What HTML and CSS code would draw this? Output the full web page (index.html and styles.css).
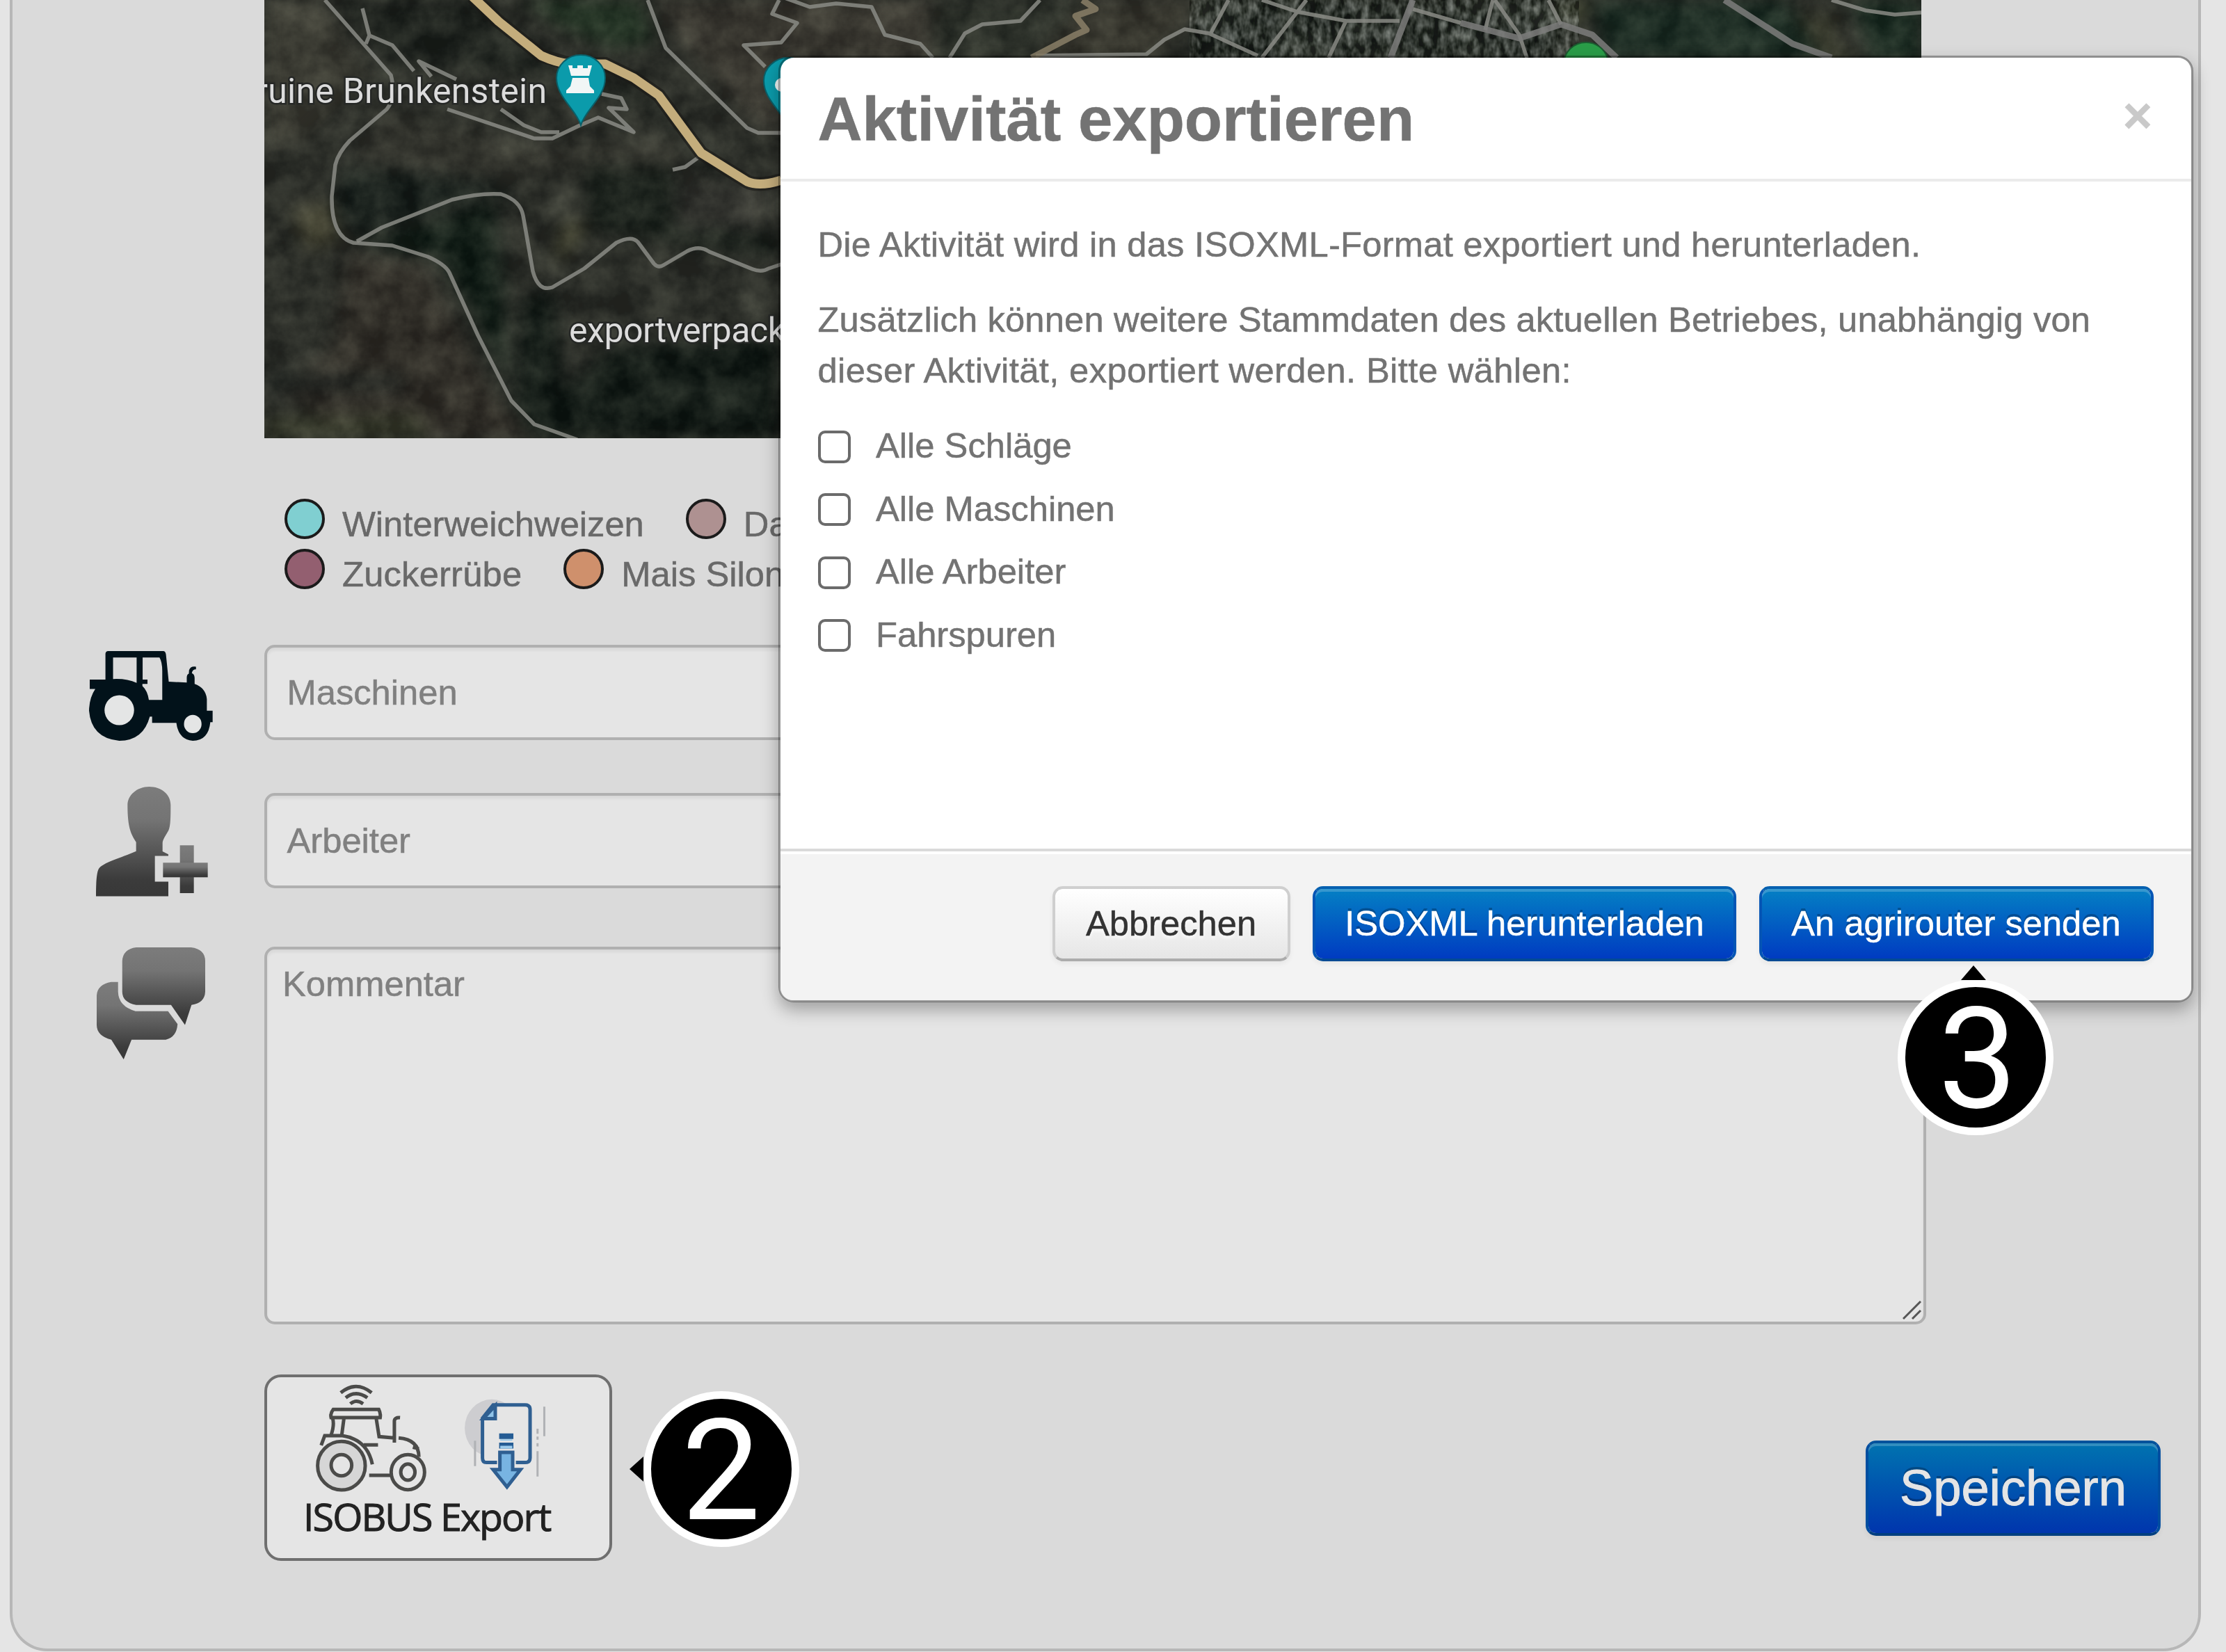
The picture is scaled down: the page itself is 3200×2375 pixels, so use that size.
FILE: index.html
```html
<!DOCTYPE html>
<html lang="de">
<head>
<meta charset="utf-8">
<title>Aktivität exportieren</title>
<link rel="stylesheet" href="styles.css">
</head>
<body>
<main class="panel">
  <div class="row map-row">
    <svg class="map" viewBox="0 0 2382 630" width="2382" height="630">
      <defs>
        <filter id="soft" x="-20%" y="-20%" width="140%" height="140%" color-interpolation-filters="sRGB"><feGaussianBlur stdDeviation="12"/></filter>
        <filter id="grain" x="0" y="0" width="100%" height="100%" color-interpolation-filters="sRGB">
          <feTurbulence type="fractalNoise" baseFrequency="0.022" numOctaves="5" seed="8"/>
          <feColorMatrix values="0.7 0 0 0 -0.19  0.7 0 0 0 -0.18  0.6 0 0 0 -0.15  0 0 0 0 0.34"/>
        </filter>
        <filter id="town" x="0" y="0" width="100%" height="100%" color-interpolation-filters="sRGB">
          <feTurbulence type="fractalNoise" baseFrequency="0.09 0.05" numOctaves="3" seed="3"/>
          <feColorMatrix values="1.5 0 0 0 -0.52  1.5 0 0 0 -0.5  1.5 0 0 0 -0.53  0 0 0 0 0.5"/>
        </filter>
      </defs>
      <rect width="2382" height="630" fill="#30322c"/>
      <g filter="url(#soft)">
        <path fill="#1f241f" d="M100 0H300L420 90 560 140 640 230 720 290 640 250 560 160 400 110 180 90Z"/>
        <path fill="#263c28" d="M370 0H540L560 60 500 70 430 40Z"/>
        <path fill="#423e36" d="M560 0H980V90H760L740 190 700 170 600 60Z"/>
        <path fill="#45443a" d="M0 0H80L150 110 60 200 0 210Z"/>
        <path fill="#3c3c34" d="M170 160L400 210 600 200 600 250 430 240 320 260 130 230Z"/>
        <path fill="#161f1b" d="M110 240L330 260 370 300 330 280 130 340 100 300Z"/>
        <path fill="#0e1d15" d="M140 350L330 290 345 400 350 560 420 630 380 620 300 450 250 370Z"/>
        <path fill="#58563f" d="M40 300L95 290 110 345 60 360Z"/>
        <path fill="#37322b" d="M120 365L230 380 330 570 390 630 130 630 20 560 100 500Z"/>
        <path fill="#171f19" d="M460 240L590 240 590 320 740 340V370L600 350 470 330Z"/>
        <path fill="#3a3a35" d="M600 260H720V330H590Z"/>
        <path fill="#0e1813" d="M370 430L415 420 430 560 500 500 740 480V630H390L360 560Z"/>
        <path fill="#5b5a3f" d="M430 320L465 320 440 360 415 380Z"/>
        <path fill="#434632" d="M0 600L220 595 240 630H0Z"/>
        <path fill="#1a1f1d" d="M0 540H200V560H0Z"/>
        <path fill="#2f342c" d="M960 0H1180L1100 90H960Z"/>
        <path fill="#3f3d33" d="M1180 0H1360L1260 90H1110Z"/>
        <path fill="#2b332f" d="M1340 0H1860V90H1340Z"/>
        <path fill="#4f543a" d="M1850 0H1910L1890 35 1870 35Z"/>
        <path fill="#1b3126" d="M1910 0H2190L2240 90H1930Z"/>
        <path fill="#454735" d="M2200 20H2260V60L2300 90H2240Z"/>
        <path fill="#1a3024" d="M2280 0H2382V90H2310Z"/>
      </g>
      <rect width="2382" height="630" filter="url(#grain)"/>
      <rect x="1330" width="560" height="100" filter="url(#town)"/>
      <g class="paths">
        <path d="M87 0L182 108Q190 140 176 157L123 202 Q106 220 102 237L97 282Q96 340 128 349L184 353 235 369Q260 380 266 392L307 482 355 576 388 610 450 632"/>
        <path d="M133 347L169 327 270 287Q310 277 340 279 368 288 372 310L386 390Q394 420 414 413L460 386 506 349Q528 338 537 348L560 379Q566 386 574 381L608 361Q625 352 640 362L702 387Q715 392 725 386L743 380"/>
        <path d="M141 12L151 51 184 65 215 102M151 51L146 63M240 110L222 88 276 114"/>
        <path d="M263 157L388 199H414L454 180 480 169 531 190 495 155 521 157 513 141 485 135M340 157L373 180 398 190H424"/>
        <path d="M551 0L577 69 694 184 710 191H743M587 244L605 240 623 227"/>
        <path d="M740 0L730 20 766 33 743 61 689 65 720 96M748 -3L784 10 822 5 873 10 892 50 943 63 961 83"/>
        <path d="M1115 0L1087 30 1032 35 1007 48 985 83M1109 80L1268 78 1294 57 1323 42 1358 48 1428 80"/>
        <path d="M1386 0L1361 47M1434 0L1485 17 1555 30H1632M1498 0L1434 83M1555 30L1530 83M1651 13L1720 33"/>
        <path d="M1766 0L1755 43M1769 0L1804 50 1815 83M1846 0L1864 35M2253 0L2302 15 2344 21 2382 18"/>
        <path class="wide" d="M1651 0L1619 83M1720 33L1804 55 1864 35 1909 50 1944 83M2099 0L2197 63 2253 83"/>
        <path class="track" d="M1176 0L1195 13 1166 23 1182 43 1166 50 1103 83"/>
      </g>
      <path class="road-edge" d="M299 -5L337 31 398 80 439 92H490L531 112 567 137 628 220 694 261Q708 269 743 259"/>
      <path class="road" d="M299 -5L337 31 398 80Q420 90 439 92H490L531 112 567 137 628 220 694 261Q712 269 743 259"/>
      <g>
        <path class="pin" d="M455 180C449 158 420 140 420 112A35 33 0 0 1 490 112C490 140 461 158 455 180Z"/>
        <path fill="#f1f6f6" d="M437 94H443V98H450V94H458V98H465V94H471L467 109H441ZM443 112H466L468 124 474 130V134H434V130L440 124Z"/>
        <path class="pin" d="M753 184C747 162 718 144 718 116A35 33 0 0 1 788 116C788 144 759 162 753 184Z"/>
        <circle cx="744" cy="122" r="10" fill="#f1f6f6"/>
        <ellipse cx="1900" cy="92" rx="32" ry="31" fill="#2a9d48" stroke="#1b5c30" stroke-width="2"/>
      </g>
      <text class="map-label" x="-12" y="148" textLength="418">ruine Brunkenstein</text>
      <text class="map-label" x="438" y="492" textLength="311">exportverpack</text>
    </svg>
  </div>

  <div class="row legend">
    <div class="legend-line">
      <span class="crop"><i class="dot wheat"></i>Winterweichweizen</span>
      <span class="crop"><i class="dot dark"></i>Da</span>
    </div>
    <div class="legend-line">
      <span class="crop beet-name"><i class="dot beet"></i>Zuckerrübe</span>
      <span class="crop"><i class="dot maize"></i>Mais Silon</span>
    </div>
  </div>

  <div class="row machines">
    <svg class="icon tractor" viewBox="85 87 536 305" preserveAspectRatio="none" fill="#02121a">
      <path fill-rule="evenodd" d="M156 96Q157 87 168 87H406Q416 87 418 99L430 191 508 194V178Q508 166 517 164L518 152Q524 137 548 140V149Q533 149 530 162 541 165 542 178V199Q590 212 595 250V290H620V329H610Q602 392 534 392 472 388 463 331H358V310H348Q320 392 216 392 95 384 85 290 86 246 112 216H88V184H156ZM189 109V182Q250 180 291 195V109ZM317 109V184H338V199H316V206Q338 222 344 253H402V155Q402 125 390 109Z"/>
      <ellipse cx="216" cy="288" rx="64" ry="51" fill="#e4e5e5"/>
      <ellipse cx="534" cy="335" rx="38" ry="31" fill="#e4e5e5"/>
    </svg>
    <div class="field">Maschinen</div>
  </div>

  <div class="row workers">
    <svg class="icon person" viewBox="113 549 483 375" preserveAspectRatio="none">
      <defs>
        <linearGradient id="gray" x1="0" y1="0" x2="0" y2="1"><stop offset="0" stop-color="#7c7c7c"/><stop offset=".3" stop-color="#747474"/><stop offset=".85" stop-color="#3b3b3b"/><stop offset="1" stop-color="#383838"/></linearGradient>
      </defs>
      <path fill="url(#gray)" d="M342 549C395 549 435 575 435 612 435 650 435 682 426 698 412 718 400 730 400 742V770L425 780V785H367V873H425V923H113C113 880 115 845 124 830 140 808 220 792 286 769V738C265 712 249 690 249 612 249 578 290 549 342 549Z"/>
      <path fill="url(#gray)" d="M475 749H535V912H475Z"/>
      <path fill="url(#gray)" d="M402 808H595V858H402Z"/>
    </svg>
    <div class="field">Arbeiter</div>
  </div>

  <div class="row comment">
    <svg class="icon chat" viewBox="118 1099 467 381" preserveAspectRatio="none" fill="url(#gray)">
      <path d="M288 1099H524Q585 1105 585 1146V1250Q583 1288 526 1295L498 1363 438 1295H288Q228 1286 228 1250V1146Q230 1105 288 1099Z"/>
      <path d="M180 1217H210V1250Q212 1300 285 1316H425L466 1360Q462 1405 415 1413H268L234 1480 181 1413Q118 1400 118 1362V1262Q122 1225 180 1217Z"/>
    </svg>
    <div class="field area">Kommentar
      <svg class="grip" width="28" height="28" viewBox="0 0 28 28" fill="none" stroke="#555" stroke-width="3"><path d="M1 26L26 1M14 26L26 14"/></svg>
    </div>
  </div>

  <div class="row actions">
    <div class="isobus">
      <svg class="isobus-art" viewBox="20 52 979 518" preserveAspectRatio="none">
        <g class="ink">
          <path d="M235 122Q278 68 322 122M249 144Q278 108 310 144M262 170Q278 148 298 170"/>
          <path d="M214 194H342Q348 212 346 230H208Q205 212 214 194ZM212 232Q218 260 208 305M244 234L238 304M335 234L343 312 385 318M386 338V245Q386 228 402 230M398 318Q455 325 455 400M455 365L438 358M180 350L190 308H240Q310 325 324 432M300 348H340M315 480H378"/>
          <ellipse class="tyre" cx="237" cy="438" rx="67" ry="105"/>
          <ellipse cx="237" cy="436" rx="29" ry="46"/>
          <ellipse cx="424" cy="466" rx="47" ry="76"/>
          <ellipse cx="424" cy="466" rx="20" ry="35"/>
        </g>
        <ellipse cx="660" cy="275" rx="76" ry="124" fill="#cdcdd0"/>
        <path class="doc" fill="#e5e5e5" d="M675 424H645Q634 424 634 404V232L664 175H754Q768 175 768 196V404Q768 424 754 424H728"/>
        <path class="doc" fill="#8fc3e8" d="M636 234L670 178V234Z"/>
        <path fill="#e5e5e5" d="M676 400H726V440H676Z"/>
        <path fill="#245c94" d="M681 298H721V322H681ZM681 338H721V364H681Z"/>
        <path fill="#9ccbec" d="M684 324H718V330H684ZM684 352H718V364H684Z"/>
        <path class="doc" fill="#78b4e2" d="M683 380H719V455H741L703 530 664 455H683Z"/>
        <path class="speed" d="M613 330V440M808 182V310M789 375V485M789 278V300M789 312V325M789 340V355"/>
      </svg>
      <span class="isobus-label">ISOBUS Export</span>
    </div>
    <button class="btn primary large">Speichern</button>
  </div>
</main>

<section class="modal">
  <header class="modal-header">
    <h3>Aktivität exportieren</h3>
    <span class="close">×</span>
  </header>
  <div class="modal-body">
    <p class="intro">Die Aktivität wird in das ISOXML-Format exportiert und herunterladen.</p>
    <p class="hint">Zusätzlich können weitere Stammdaten des aktuellen Betriebes, unabhängig von<br><span class="choose">dieser Aktivität, exportiert werden. Bitte wählen:</span></p>
    <label class="check"><i class="box"></i>Alle Schläge</label>
    <label class="check"><i class="box"></i>Alle Maschinen</label>
    <label class="check"><i class="box"></i>Alle Arbeiter</label>
    <label class="check"><i class="box"></i>Fahrspuren</label>
  </div>
  <footer class="modal-footer">
    <button class="btn cancel">Abbrechen</button>
    <button class="btn primary download">ISOXML herunterladen</button>
    <button class="btn primary send">An agrirouter senden</button>
  </footer>
</section>

<div class="badge two"><svg class="tip" width="20" height="36" viewBox="0 0 20 36"><path d="M0 18L20 0V36Z"/></svg>2</div>
<div class="badge three"><svg class="tip" width="36" height="21" viewBox="0 0 36 21"><path d="M18 0L36 21H0Z"/></svg>3</div>
</body>
</html>
```
FILE: styles.css
```css
* { box-sizing: border-box; }

body {
  margin: 0;
  width: 3200px;
  height: 2375px;
  position: relative;
  overflow: hidden;
  background: #e5e5e5;
  color: #737373;
  font: 50.7px/72.4px "Liberation Sans", Arial, sans-serif;
  -webkit-text-stroke: .5px currentColor;
}

.panel {
  margin: 0 36px 0 14px;
  height: 2374px;
  border: 4px solid #b7b7b7;
  border-top: 0;
  border-radius: 0 0 54px 54px;
  background: #dadada;
  display: flex;
  flex-direction: column;
}

.row { display: flex; position: relative; }

.map-row { height: 630px; padding-left: 362px; }
.map { display: block; overflow: hidden; }
.paths path { fill: none; stroke: #898b85; stroke-width: 5.5; stroke-linejoin: round; opacity: .85; }
.paths .wide { stroke: #7d7d7b; stroke-width: 9; }
.paths .track { stroke: #8a7f67; stroke-width: 9; }
.road { fill: none; stroke: #c4ad7c; stroke-width: 13; stroke-linejoin: round; }
.road-edge { fill: none; stroke: #1b1916; stroke-width: 20; opacity: .6; }
.pin { fill: #0b9bab; stroke: #0a5f69; stroke-width: 2; }
.map-label {
  font: 50px Roboto, sans-serif;
  fill: #dcdcdc;
  stroke: #262826;
  stroke-width: 5;
  paint-order: stroke;
  -webkit-text-stroke: 5px #262826;
}

.legend {
  flex-direction: column;
  padding: 79px 0 0 391px;
  height: 297px;
  color: #696969;
}
.legend-line { display: flex; gap: 60px; height: 72.4px; line-height: 89px; }
.crop { display: flex; gap: 25px; }
.beet-name { letter-spacing: .2px; }
.dot {
  width: 58px;
  height: 58px;
  margin-top: 8px;
  border: 4px solid #1b1b1b;
  border-radius: 50%;
}
.wheat { background: #80cfd1; }
.dark { background: #ae9191; }
.beet { background: #935f70; }
.maize { background: #cf906c; }

.icon { display: block; flex: none; }
.field {
  width: 2389px;
  flex: none;
  border: 4px solid #b0b0b0;
  border-radius: 15px;
  background: #e5e5e5;
  box-shadow: inset 0 4px 4px rgba(0, 0, 0, .06);
  color: #808080;
  padding-left: 28.5px;
  line-height: 129px;
}

.machines { height: 137px; padding-left: 110px; gap: 74px; }
.tractor { width: 178px; height: 129px; margin-top: 9px; }
.workers { height: 137px; margin-top: 76px; padding-left: 120px; gap: 81px; }
.person { width: 161px; height: 158px; margin-top: -9px; }
.comment { height: 542.5px; margin-top: 84px; padding-left: 121px; gap: 85px; }
.chat { width: 156px; height: 161px; margin-top: 1px; }
.area { padding: 12px 0 0 22px; line-height: 76px; position: relative; }
.grip { position: absolute; right: 2px; bottom: 2px; }

.actions {
  margin-top: 72.5px;
  padding: 0 54px 0 362px;
  justify-content: space-between;
}
.isobus {
  width: 500px;
  height: 268px;
  border: 4px solid #6f6f6f;
  border-radius: 24px;
  background: #e5e5e5;
  display: flex;
  flex-direction: column;
}
.isobus-art { width: 500px; height: 172px; margin: -1px 0 0 -4px; flex: none; }
.isobus-label {
  margin-top: -3px;
  padding-left: 52px;
  color: #222;
  font: 55.5px/64px "Open Sans", sans-serif;
  letter-spacing: -1.9px;
  white-space: nowrap;
  -webkit-text-stroke: 1px currentColor;
}
.ink path, .ink ellipse { stroke: #4b4b49; stroke-width: 5; vector-effect: non-scaling-stroke; }
.ink path { fill: none; }
.ink ellipse { fill: #e5e5e5; }
.ink .tyre { fill: #d6d6d6; }
.doc { stroke: #2f5f91; stroke-width: 5; vector-effect: non-scaling-stroke; }
.speed { fill: none; stroke: #b0b2b5; stroke-width: 3; vector-effect: non-scaling-stroke; }

.btn {
  height: 108.5px;
  padding: 0;
  border: 4px solid #c5c5c5;
  border-color: #cfcfcf #cfcfcf #acacac;
  border-radius: 15px;
  background: linear-gradient(#fff, #e6e6e6);
  box-shadow: inset 0 4px 0 rgba(255, 255, 255, .2), 0 4px 7px rgba(0, 0, 0, .05);
  color: #333;
  font: inherit;
  text-shadow: 0 4px 4px rgba(255, 255, 255, .75);
}
.primary {
  border-color: #0460b0 #0455b5 #024a94;
  background: linear-gradient(#0480c4, #003bc1) padding-box;
  color: #fff;
  text-shadow: 0 -3.6px 0 rgba(0, 0, 0, .25);
}
.large {
  width: 424px;
  height: 137.5px;
  margin-top: 94.5px;
  border-color: #00529c #004ea0 #003f80;
  background: linear-gradient(#0073b0, #0035ad) padding-box;
  color: #e5e5e5;
  font-size: 72.4px;
  -webkit-text-stroke: 1px currentColor;
}

.modal {
  position: absolute;
  left: 1118.5px;
  top: 79.5px;
  width: 2034.5px;
  height: 1361px;
  border: 3.6px solid rgba(0, 0, 0, .33);
  border-radius: 22px;
  background: #fff padding-box;
  box-shadow: 0 11px 25px rgba(0, 0, 0, .3);
  display: flex;
  flex-direction: column;
}
.modal-header {
  height: 178px;
  padding: 0 56px 0 54px;
  border-bottom: 4px solid #ebebeb;
  display: flex;
  justify-content: space-between;
}
h3 { margin: 0; font-size: 88.7px; line-height: 177px; }
.close { color: #c9c9c9; font-size: 72.4px; font-weight: bold; line-height: 166px; }
.modal-body { flex: 1; padding: 55px 54px 0; }
p { margin: 0 0 36.2px; white-space: nowrap; }
.intro { letter-spacing: .24px; }
.hint { letter-spacing: .16px; }
.choose { letter-spacing: .37px; }
.check { display: flex; align-items: center; gap: 36.5px; margin-bottom: 18.1px; }
.box {
  width: 47px;
  height: 47px;
  border: 4px solid #6b6b6b;
  border-radius: 10px;
  margin-top: 2px;
}
.modal-footer {
  height: 218px;
  padding: 50px 54.5px 0;
  border-top: 4px solid #dadada;
  border-radius: 0 0 18px 18px;
  background: #f3f3f3;
  box-shadow: inset 0 4px 0 #fff;
  display: flex;
  justify-content: flex-end;
  gap: 32.5px;
}
.cancel { width: 342px; }
.download { width: 609px; }
.send { width: 567px; }

.badge {
  position: absolute;
  width: 224px;
  height: 224px;
  border: 11.5px solid #fff;
  border-radius: 50%;
  background: #000;
  color: #fff;
  font: 202px/208px Roboto, sans-serif;
  text-align: center;
  -webkit-text-stroke: 0;
}
.two { left: 924.5px; top: 2000px; }
.three { left: 2728px; top: 1408px; padding-left: 6px; }
.tip { position: absolute; }
.two .tip { left: -31px; top: 83px; }
.three .tip { left: 79.5px; top: -31.5px; }
```
